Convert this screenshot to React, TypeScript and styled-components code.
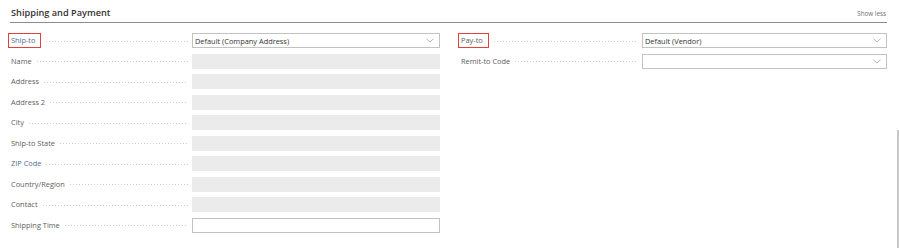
import React from "react";
import styled, { createGlobalStyle } from "styled-components";

const Global = createGlobalStyle`
  html, body { margin: 0; padding: 0; background: #ffffff; }
  body { font-family: "Open Sans", "Noto Sans", sans-serif; overflow: hidden; }
  #root { width: 899px; height: 248px; }
`;

const Page = styled.div`
  position: relative;
  width: 899px;
  height: 248px;
  padding: 0 12px 0 10px;
  box-sizing: border-box;
`;

const Header = styled.div`
  display: flex;
  align-items: flex-end;
  justify-content: space-between;
  height: 23px;
  border-bottom: 1px solid #8c8c8c;
  box-sizing: border-box;
  padding: 0 1px 3px 1px;
`;

const Title = styled.div`
  font-size: 9.2px;
  font-weight: 600;
  color: #333333;
  line-height: 12px;
`;

const ShowLess = styled.div`
  font-size: 6.3px;
  color: #707070;
  line-height: 8px;
  padding-bottom: 1px;
`;

const Columns = styled.div`
  display: grid;
  grid-template-columns: 429px 426px;
  column-gap: 21px;
  padding: 10px 0 0 1px;
  align-items: start;
`;

const Column = styled.div`
  display: flex;
  flex-direction: column;
  gap: 5.5px;
`;

const Row = styled.div`
  display: grid;
  grid-template-columns: 181px 1fr;
  height: 15px;
  align-items: center;
`;

const LabelCell = styled.div`
  display: flex;
  align-items: center;
  height: 15px;
  padding-right: 4px;
  box-sizing: border-box;
  min-width: 0;
`;

const Label = styled.span<{ $link?: boolean; $marked?: boolean }>`
  font-size: 7.4px;
  line-height: 11px;
  white-space: nowrap;
  color: ${(p) => (p.$link ? "#4f6f94" : "#5e5e5e")};
  ${(p) =>
    p.$marked
      ? `border: 1px solid #e2413c; margin-left: -3px; padding: 1px 5px 1px 2px;`
      : ""}
`;

const Leader = styled.span`
  flex: 1;
  height: 1px;
  margin-left: 4px;
  margin-top: 1px;
  background-image: radial-gradient(circle, #cfcfcf 0.6px, transparent 0.7px);
  background-size: 3px 1px;
  background-repeat: repeat-x;
`;

const Field = styled.div<{ $disabled?: boolean }>`
  position: relative;
  height: 15px;
  box-sizing: border-box;
  border: 1px solid ${(p) => (p.$disabled ? "#ebebec" : "#c2c2c2")};
  background: ${(p) => (p.$disabled ? "#ebebec" : "#ffffff")};
  display: flex;
  align-items: center;
  padding: 0 4px 0 2px;
  font-size: 7.4px;
  color: #333333;
`;

const Value = styled.span`
  flex: 1;
  white-space: nowrap;
`;

const Chevron = styled.svg`
  width: 8px;
  height: 5px;
  flex: none;
  margin-right: 1px;
`;

const ScrollThumb = styled.div`
  position: absolute;
  right: 0;
  top: 130px;
  width: 2px;
  height: 118px;
  background: #c9c9c9;
`;

type FieldDef = {
  label: string;
  value?: string;
  kind: "select" | "disabled" | "text";
  link?: boolean;
  marked?: boolean;
};

const left: FieldDef[] = [
  { label: "Ship-to", value: "Default (Company Address)", kind: "select", link: true, marked: true },
  { label: "Name", kind: "disabled" },
  { label: "Address", kind: "disabled" },
  { label: "Address 2", kind: "disabled" },
  { label: "City", kind: "disabled" },
  { label: "Ship-to State", kind: "disabled" },
  { label: "ZIP Code", kind: "disabled", link: true },
  { label: "Country/Region", kind: "disabled" },
  { label: "Contact", kind: "disabled" },
  { label: "Shipping Time", kind: "text" },
];

const right: FieldDef[] = [
  { label: "Pay-to", value: "Default (Vendor)", kind: "select", marked: true },
  { label: "Remit-to Code", value: "", kind: "select" },
];

function FieldRow({ f }: { f: FieldDef }) {
  return (
    <Row>
      <LabelCell>
        <Label $link={f.link} $marked={f.marked}>{f.label}</Label>
        <Leader />
      </LabelCell>
      <Field $disabled={f.kind === "disabled"}>
        <Value>{f.value}</Value>
        {f.kind === "select" && (
          <Chevron viewBox="0 0 8 5">
            <path d="M0.5 0.8 L4 4 L7.5 0.8" fill="none" stroke="#a0a0a0" strokeWidth="0.8" />
          </Chevron>
        )}
      </Field>
    </Row>
  );
}

export default function App() {
  return (
    <>
      <Global />
      <Page>
        <Header>
          <Title>Shipping and Payment</Title>
          <ShowLess>Show less</ShowLess>
        </Header>
        <Columns>
          <Column>
            {left.map((f) => (
              <FieldRow key={f.label} f={f} />
            ))}
          </Column>
          <Column>
            {right.map((f) => (
              <FieldRow key={f.label} f={f} />
            ))}
          </Column>
        </Columns>
        <ScrollThumb />
      </Page>
    </>
  );
}
